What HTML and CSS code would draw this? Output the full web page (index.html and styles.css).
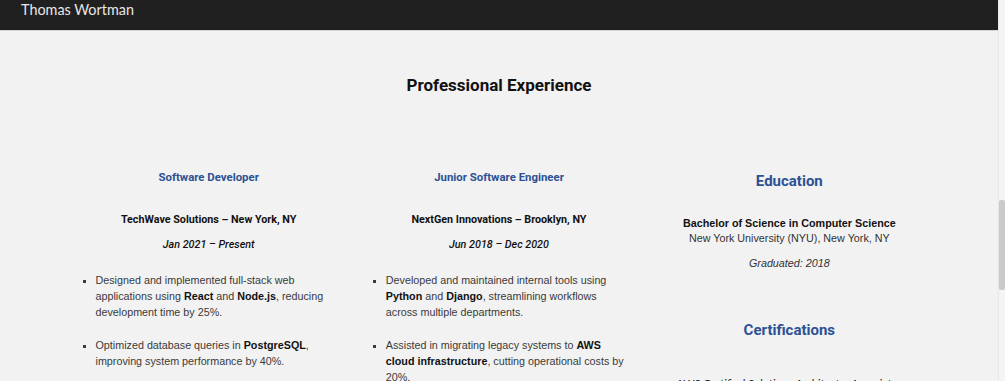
FILE: index.html
```html
<!DOCTYPE html>
<html lang="en">
<head>
  <meta charset="UTF-8">
  <meta name="viewport" content="width=device-width, initial-scale=1.0">
  <title>Thomas Wortman</title>
  <link rel="stylesheet" href="styles.css">
</head>
<body>
  <div class="window">
    <div class="page">
      <div class="top-bar">
        <div class="name">Thomas Wortman</div>
      </div>
      <div class="content">
        <h1 class="main-title">Professional Experience</h1>
        <div class="columns">
          <div class="col">
            <h2 class="job-title">Software Developer</h2>
            <p class="company">TechWave Solutions – New York, NY</p>
            <p class="dates">Jan 2021 – Present</p>
            <ul class="points">
              <li>Designed and implemented full-stack web applications using <b>React</b> and <b>Node.js</b>, reducing development time by 25%.</li>
              <li>Optimized database queries in <b>PostgreSQL</b>, improving system performance by 40%.</li>
            </ul>
          </div>
          <div class="col">
            <h2 class="job-title">Junior Software Engineer</h2>
            <p class="company">NextGen Innovations – Brooklyn, NY</p>
            <p class="dates">Jun 2018 – Dec 2020</p>
            <ul class="points">
              <li>Developed and maintained internal tools using <b>Python</b> and <b>Django</b>, streamlining workflows across multiple departments.</li>
              <li>Assisted in migrating legacy systems to <b>AWS cloud infrastructure</b>, cutting operational costs by 20%.</li>
            </ul>
          </div>
          <div class="col">
            <h2 class="side-title">Education</h2>
            <p class="degree"><b>Bachelor of Science in Computer Science</b><br>New York University (NYU), New York, NY</p>
            <p class="grad">Graduated: 2018</p>
            <h2 class="side-title cert-title">Certifications</h2>
            <ul class="certs">
              <li>AWS Certified Solutions Architect – Associate</li>
            </ul>
          </div>
        </div>
      </div>
    </div>
    <div class="scrollbar">
      <div class="thumb"></div>
    </div>
  </div>
</body>
</html>
```

FILE: styles.css
```css
*{
  margin: 0;
  padding: 0;
  box-sizing: border-box;
}
html, body{
  height: 100%;
  overflow: hidden;
  background-color: #f2f2f2;
}
.window{
  display: flex;
  height: 100%;
}
.page{
  flex: 1;
}
.top-bar{
  height: 31px;
  background-color: #202020;
  border-bottom: 1px solid #d6d6d6;
  padding: 0 21px;
}
.name{
  font-family: Lato, "Liberation Sans", sans-serif;
  font-size: 14.4px;
  line-height: 20px;
  color: #e6e6e6;
}
.content{
  width: 871px;
  margin: 0 auto;
}
.main-title{
  font-family: Roboto, "Liberation Sans", sans-serif;
  font-size: 17px;
  font-weight: 700;
  color: #111;
  text-align: center;
  margin-top: 43px;
  line-height: 22px;
}
.columns{
  display: grid;
  grid-template-columns: 1fr 1fr 1fr;
  margin-top: 72px;
}
.col{
  padding: 0 18px;
  text-align: center;
}
.job-title{
  font-family: Roboto, "Liberation Sans", sans-serif;
  font-size: 11.4px;
  font-weight: 700;
  color: #2c5194;
  line-height: 16px;
  margin-top: 1px;
}
.company{
  font-family: Roboto, "Liberation Sans", sans-serif;
  font-size: 10.75px;
  font-weight: 700;
  color: #111;
  margin-top: 27px;
  line-height: 16px;
}
.dates{
  font-family: Roboto, "Liberation Sans", sans-serif;
  font-size: 10.75px;
  font-weight: 500;
  font-style: italic;
  color: #111;
  margin-top: 9px;
  line-height: 16px;
}
.points, .certs{
  text-align: left;
  padding-left: 14px;
  list-style: square;
}
.points{
  margin-top: 19px;
}
.points li{
  font-family: "Liberation Sans", Arial, sans-serif;
  font-size: 10.75px;
  line-height: 16px;
  color: #3a3a3a;
  margin-bottom: 17px;
}
.points b{
  color: #111;
}
.side-title{
  font-family: Roboto, "Liberation Sans", sans-serif;
  font-size: 15px;
  font-weight: 700;
  color: #2c5194;
  line-height: 20px;
  margin-top: 3px;
}
.degree{
  font-family: "Liberation Sans", Arial, sans-serif;
  font-size: 10.75px;
  line-height: 15px;
  color: #333;
  margin-top: 25px;
}
.degree b{
  color: #111;
}
.grad{
  font-family: "Liberation Sans", Arial, sans-serif;
  font-size: 10.75px;
  font-style: italic;
  line-height: 15px;
  color: #333;
  margin-top: 10px;
}
.cert-title{
  margin-top: 49px;
}
.certs{
  margin-top: 36px;
}
.certs li{
  font-family: Lato, "Liberation Sans", sans-serif;
  font-size: 11px;
  line-height: 16px;
  color: #222;
}
.scrollbar{
  width: 7px;
  background-color: #f4f4f4;
  border-left: 1px solid #e8e8e8;
  padding-top: 200px;
}
.thumb{
  height: 90px;
  background-color: #cacaca;
  border-radius: 2px;
}
```
